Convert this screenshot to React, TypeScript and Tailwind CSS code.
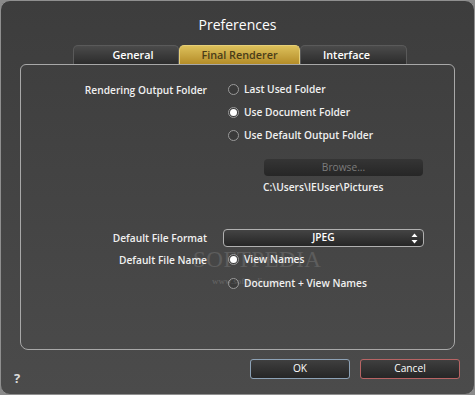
const Radio = ({ checked, label }: { checked?: boolean; label: string }) => (
  <div className="flex items-center gap-[5px] h-[16px]">
    <span className="w-[11px] h-[11px] rounded-full border border-[#9a9a9a] flex items-center justify-center bg-[#3a3a3a]">
      {checked && <span className="w-[7px] h-[7px] rounded-full bg-white" />}
    </span>
    <span>{label}</span>
  </div>
);

const Tab = ({ label, active, className }: { label: string; active?: boolean; className: string }) => (
  <div
    className={
      active
        ? `${className} h-[19px] rounded-t-[5px] flex items-center justify-center bg-gradient-to-b from-[#dcc05a] to-[#b58d27] text-[#4a3c18] border-t border-x border-[#e6cf78]`
        : `${className} h-[19px] rounded-t-[5px] flex items-center justify-center bg-gradient-to-b from-[#4b4b4b] to-[#2c2c2c] text-white border-t border-x border-[#5a5a5a]`
    }
  >
    {label}
  </div>
);

export default function App() {
  return (
    <div className="w-[475px] h-[395px] bg-[#8a8a8a] font-['Open_Sans',sans-serif] text-[10.2px] font-semibold text-[#f0f0f0]">
      <div className="relative w-full h-full rounded-[10px] border border-[#8f8f8f] bg-gradient-to-b from-[#3d3d3d] to-[#4b4b4b] flex flex-col">
        <div className="pt-[14px] h-[44px] text-center text-[14px] font-normal text-white leading-[20px]">
          Preferences
        </div>

        <div className="flex pl-[72px] text-[10.8px] leading-none">
          <Tab label="General" className="w-[106px] pl-[14px]" />
          <Tab label="Final Renderer" active className="w-[121px]" />
          <Tab label="Interface" className="w-[107px] pr-[14px]" />
        </div>

        <div className="mx-[19px] h-[286px] rounded-b-[8px] rounded-t-[6px] border border-[#a8a8a8] pt-[16px]">
          <div className="flex">
            <div className="w-[186px] text-right pt-[1px] leading-[16px]">Rendering Output Folder</div>
            <div className="ml-[21px] flex flex-col gap-[7px] leading-[16px]">
              <Radio label="Last Used Folder" />
              <Radio checked label="Use Document Folder" />
              <Radio label="Use Default Output Folder" />
            </div>
          </div>

          <div className="ml-[243px] mt-[16px] w-[159px] h-[17px] rounded-[4px] bg-gradient-to-b from-[#353535] to-[#262626] text-[#7c7c7c] font-normal flex items-center justify-center">
            Browse...
          </div>
          <div className="ml-[242px] mt-[3px] leading-[16px]">C:\Users\IEUser\Pictures</div>

          <div className="flex items-center mt-[34px]">
            <div className="w-[186px] text-right leading-[16px]">Default File Format</div>
            <div className="ml-[16px] w-[201px] h-[18px] rounded-[4px] border border-[#b0b0b0] bg-gradient-to-b from-[#444444] to-[#262626] relative flex items-center justify-center text-white">
              JPEG
              <svg className="absolute right-[5px] top-[3px]" width="7" height="11" viewBox="0 0 7 11">
                <path d="M3.5 0.5 L6.5 4 L0.5 4 Z" fill="#ffffff" />
                <path d="M3.5 10.5 L6.5 7 L0.5 7 Z" fill="#ffffff" />
              </svg>
            </div>
          </div>

          <div className="flex mt-[4px]">
            <div className="w-[186px] text-right leading-[16px] pt-[1px]">Default File Name</div>
            <div className="ml-[21px] flex flex-col gap-[8px] leading-[16px]">
              <Radio checked label="View Names" />
              <Radio label="Document + View Names" />
            </div>
          </div>
        </div>

        <div className="flex items-start mt-[9px] pr-[14px]">
          <div className="ml-[13px] mt-[13px] text-[13px] font-bold text-[#dcdcdc] leading-none">?</div>
          <div className="ml-auto flex gap-[10px]">
            <div className="w-[100px] h-[20px] rounded-[3px] border border-[#8da2b6] bg-gradient-to-b from-[#3f3f3f] to-[#262626] flex items-center justify-center text-white font-normal">
              OK
            </div>
            <div className="w-[100px] h-[20px] rounded-[3px] border border-[#b86464] bg-gradient-to-b from-[#3f3f3f] to-[#262626] flex items-center justify-center text-white font-normal">
              Cancel
            </div>
          </div>
        </div>

        <div className="absolute left-[192px] top-[247px] font-['Liberation_Serif',serif] text-[23px] font-normal text-white opacity-[0.12] tracking-[0.5px] pointer-events-none leading-none">
          SOFTPEDIA
        </div>
        <div className="absolute left-[211px] top-[276px] font-['Liberation_Serif',serif] text-[9px] font-normal text-white opacity-[0.16] pointer-events-none leading-none">
          www.softpedia.com
        </div>
      </div>
    </div>
  );
}
